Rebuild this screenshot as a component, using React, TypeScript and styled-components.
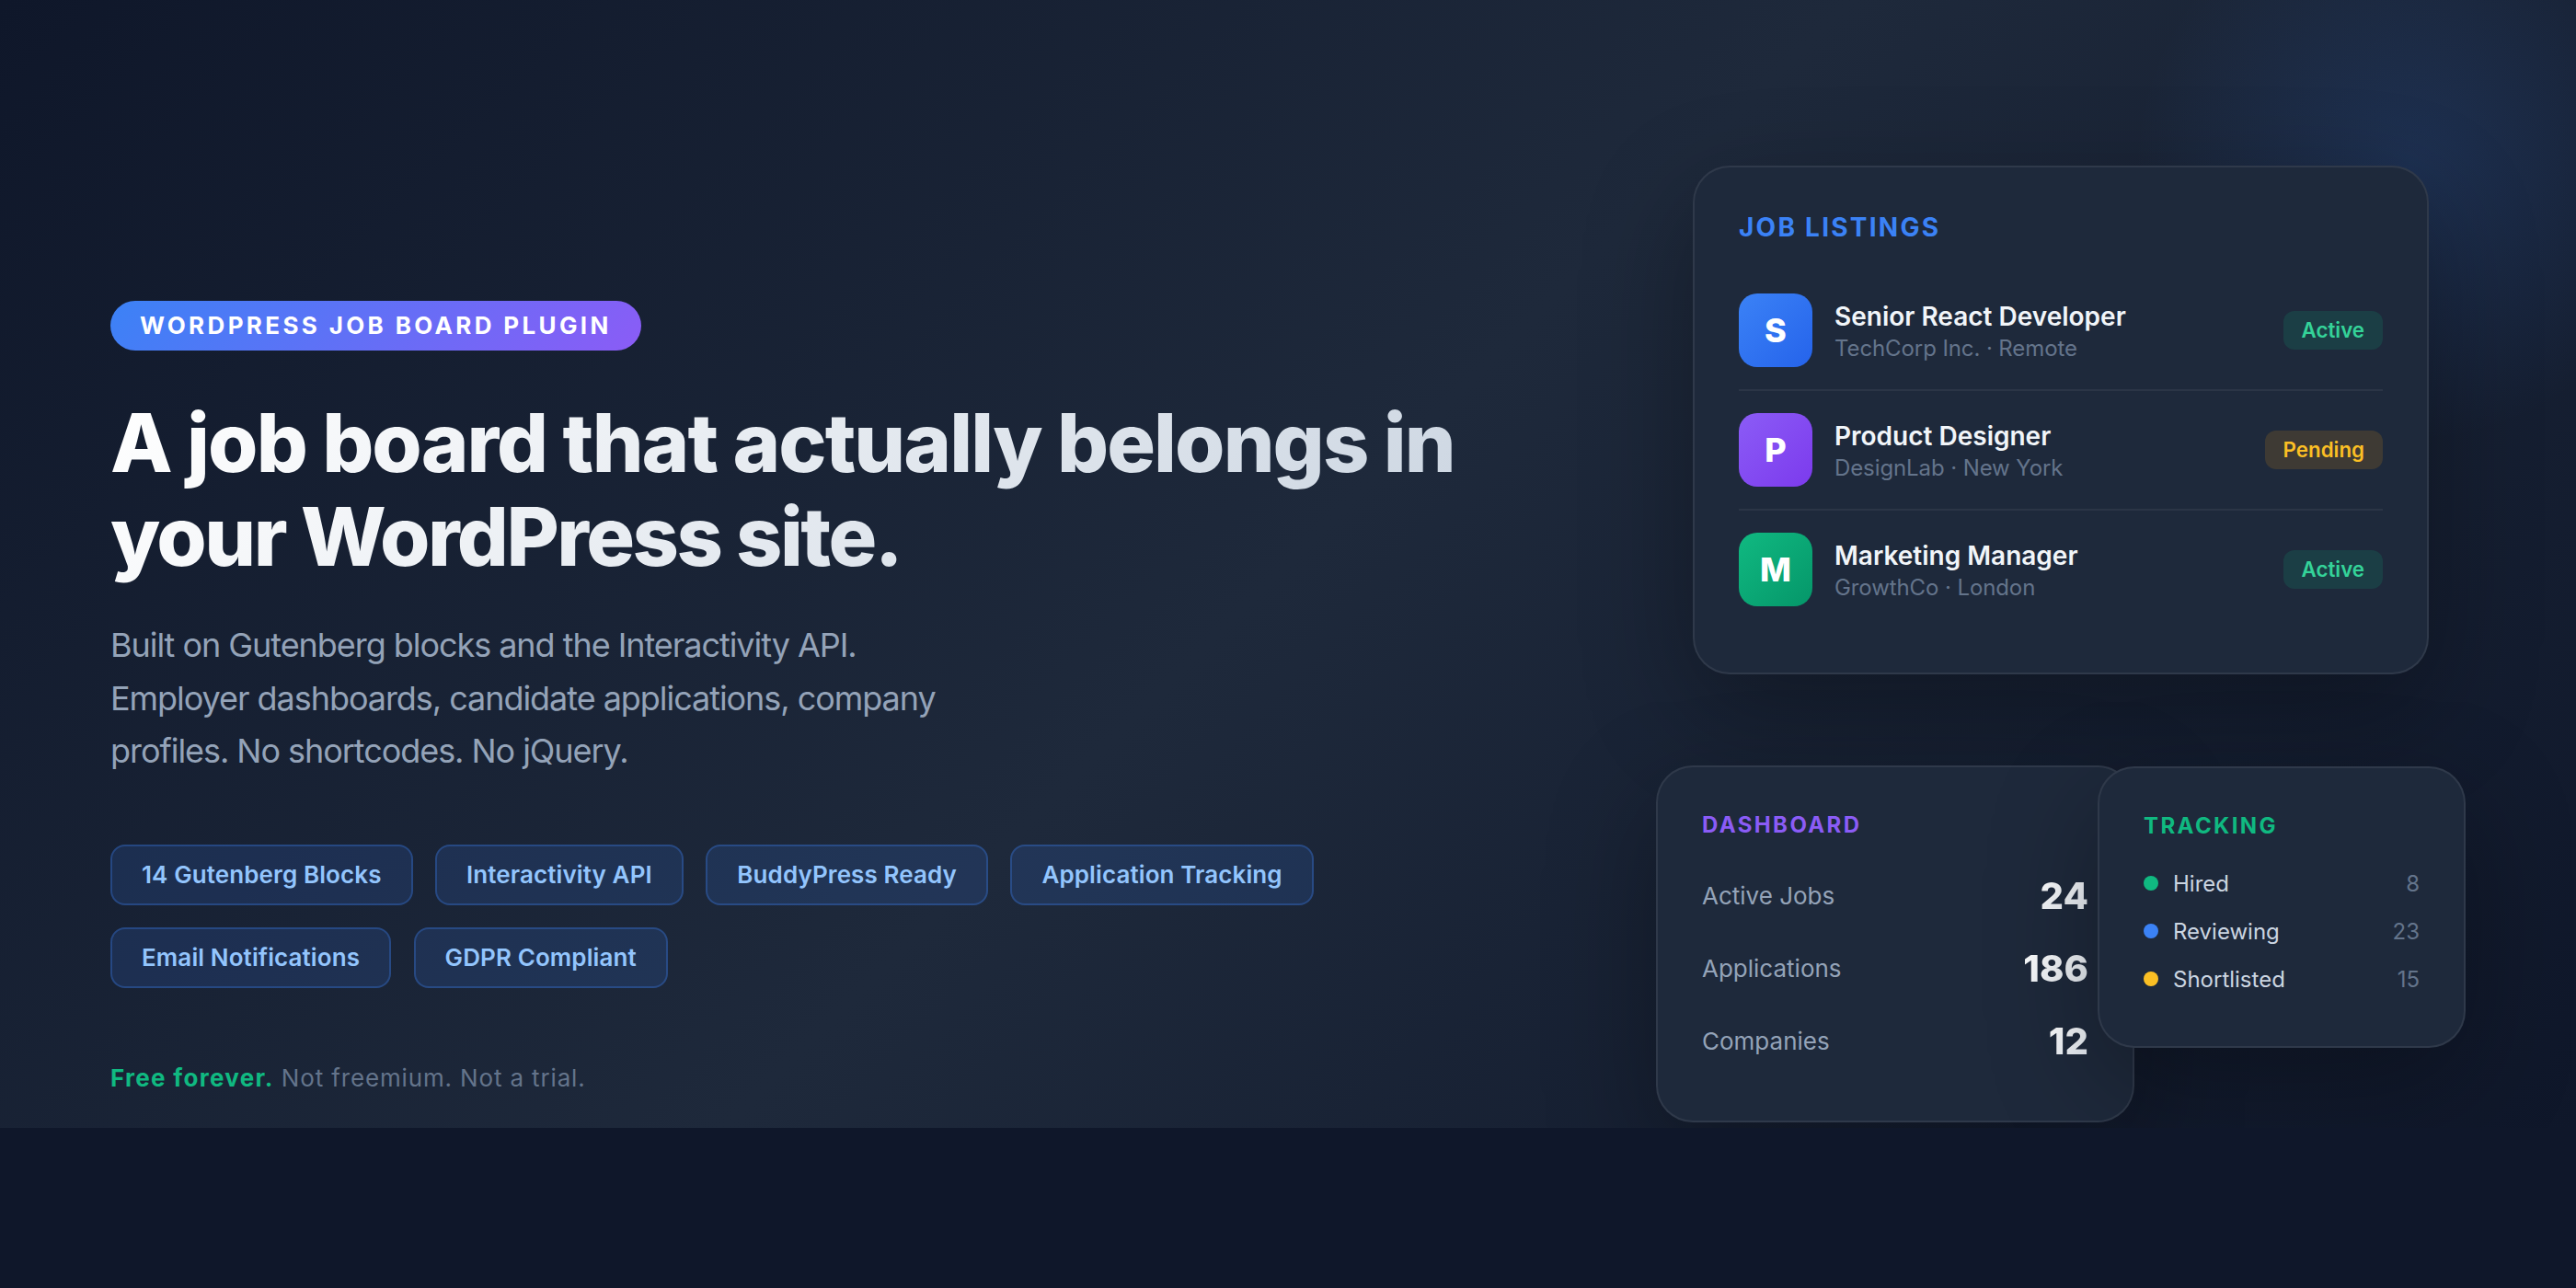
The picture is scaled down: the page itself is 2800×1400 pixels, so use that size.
import styled, { createGlobalStyle } from "styled-components";

const GlobalStyle = createGlobalStyle`
  html, body {
    margin: 0;
    padding: 0;
    background: #0f172a;
  }
  body {
    width: 2800px;
    height: 1400px;
    overflow: hidden;
    font-family: Inter, "Noto Sans", sans-serif;
  }
  * {
    box-sizing: border-box;
  }
`;

const Hero = styled.section`
  height: 1226px;
  padding: 0 120px;
  display: flex;
  justify-content: space-between;
  overflow: hidden;
  background:
    radial-gradient(circle at 2620px 180px, rgba(59, 130, 246, 0.15) 0, rgba(59, 130, 246, 0) 300px),
    linear-gradient(135deg, #0f172a 0%, #1e293b 50%, #0f172a 100%);
`;

const Copy = styled.div`
  width: 1500px;
  padding-top: 327px;
`;

const Eyebrow = styled.div`
  display: inline-block;
  height: 54px;
  padding: 0 32px;
  border-radius: 27px;
  background: linear-gradient(135deg, #3b82f6, #8b5cf6);
  color: #fff;
  font-size: 26px;
  line-height: 54px;
  font-weight: 700;
  letter-spacing: 3.35px;
  text-transform: uppercase;
`;

const Title = styled.h1`
  margin: 49px 0 0;
  font-size: 88px;
  line-height: 102px;
  font-weight: 800;
  letter-spacing: -0.022em;
  background: linear-gradient(135deg, #ffffff 0%, #cbd5e1 100%);
  -webkit-background-clip: text;
  background-clip: text;
  color: transparent;
  width: fit-content;
`;

const TightLine = styled.span`
  letter-spacing: -0.029em;
`;

const Lead = styled.p`
  margin: 39px 0 0;
  max-width: 960px;
  font-size: 36px;
  line-height: 57.6px;
  font-weight: 400;
  letter-spacing: -1.05px;
  color: #94a3b8;
`;

const Tags = styled.div`
  margin-top: 72px;
  display: flex;
  flex-wrap: wrap;
  gap: 24px 24.5px;
`;

const Tag = styled.span`
  height: 66px;
  padding: 0 32px;
  border-radius: 16px;
  border: 2px solid rgba(59, 130, 246, 0.3);
  background: rgba(59, 130, 246, 0.15);
  color: #93c5fd;
  font-size: 26px;
  line-height: 62px;
  font-weight: 600;
  letter-spacing: 0.1px;
`;

const Note = styled.p`
  margin: 80px 0 0;
  font-size: 26px;
  line-height: 36px;
  letter-spacing: 0.85px;
  color: #64748b;
  strong {
    font-weight: 700;
    letter-spacing: 1.3px;
    color: #10b981;
  }
`;

const Visual = styled.div`
  width: 880px;
  padding-top: 180px;
`;

const Card = styled.div`
  border-radius: 40px;
  border: 2px solid rgba(255, 255, 255, 0.08);
  background: #1e293b;
  padding: 48px;
  box-shadow: 0 40px 120px rgba(0, 0, 0, 0.3);
`;

const ListingsCard = styled(Card)`
  width: 800px;
  height: 553px;
  margin-left: 40px;
`;

const CardLabel = styled.div<{ $color: string }>`
  font-size: 28px;
  line-height: 34px;
  font-weight: 700;
  letter-spacing: 0.08em;
  text-transform: uppercase;
  color: ${(p) => p.$color};
`;

const SmallLabel = styled(CardLabel)`
  font-size: 24px;
  line-height: 30px;
  letter-spacing: 0.1em;
`;

const ListingRows = styled.div`
  margin-top: 31px;
`;

const ListingRow = styled.div`
  display: flex;
  align-items: center;
  gap: 24px;
  padding: 24px 0;
  & + & {
    border-top: 2px solid rgba(255, 255, 255, 0.06);
  }
`;

const Avatar = styled.div<{ $from: string; $to: string }>`
  width: 80px;
  height: 80px;
  flex-shrink: 0;
  border-radius: 20px;
  display: flex;
  align-items: center;
  justify-content: center;
  background: linear-gradient(135deg, ${(p) => p.$from}, ${(p) => p.$to});
  color: #fff;
  font-size: 36px;
  font-weight: 800;
`;

const ListingText = styled.div`
  flex: 1;
  padding-top: 2px;
`;

const ListingName = styled.div`
  font-size: 28px;
  line-height: 34px;
  font-weight: 600;
  color: #f1f5f9;
`;

const ListingMeta = styled.div`
  margin-top: 3px;
  font-size: 24px;
  line-height: 30px;
  letter-spacing: -0.1px;
  color: #64748b;
`;

const Status = styled.span<{ $kind: "active" | "pending" }>`
  height: 42px;
  padding: 0 20px;
  border-radius: 12px;
  font-size: 22.3px;
  line-height: 42px;
  font-weight: 600;
  color: ${(p) => (p.$kind === "active" ? "#34d399" : "#fbbf24")};
  background: ${(p) => (p.$kind === "active" ? "rgba(16, 185, 129, 0.15)" : "rgba(245, 158, 11, 0.15)")};
`;

const BottomRow = styled.div`
  margin-top: 99px;
  display: flex;
  align-items: flex-start;
`;

const DashboardCard = styled(Card)`
  width: 520px;
  height: 388px;
`;

const TrackingCard = styled(Card)`
  position: relative;
  width: 400px;
  height: 306px;
  margin: 1px 0 0 -40px;
`;

const StatRows = styled.div`
  margin-top: 22px;
`;

const StatRow = styled.div`
  height: 79px;
  display: flex;
  align-items: center;
  justify-content: space-between;
`;

const StatLabel = styled.span`
  font-size: 26px;
  color: #94a3b8;
`;

const StatValue = styled.span`
  font-size: 40px;
  font-weight: 800;
  background: linear-gradient(135deg, #ffffff, #e2e8f0);
  -webkit-background-clip: text;
  background-clip: text;
  color: transparent;
`;

const TrackRows = styled.div`
  margin-top: 21px;
`;

const TrackRow = styled.div`
  height: 52px;
  display: flex;
  align-items: center;
  gap: 16px;
`;

const Dot = styled.span<{ $color: string }>`
  width: 16px;
  height: 16px;
  border-radius: 50%;
  background: ${(p) => p.$color};
`;

const TrackLabel = styled.span`
  flex: 1;
  font-size: 24px;
  color: #cbd5e1;
`;

const TrackCount = styled.span`
  font-size: 24px;
  color: #64748b;
`;

const tags = [
  "14 Gutenberg Blocks",
  "Interactivity API",
  "BuddyPress Ready",
  "Application Tracking",
  "Email Notifications",
  "GDPR Compliant",
];

const listings = [
  { letter: "S", from: "#3b82f6", to: "#2563eb", name: "Senior React Developer", meta: "TechCorp Inc. · Remote", kind: "active" as const },
  { letter: "P", from: "#8b5cf6", to: "#7c3aed", name: "Product Designer", meta: "DesignLab · New York", kind: "pending" as const },
  { letter: "M", from: "#10b981", to: "#059669", name: "Marketing Manager", meta: "GrowthCo · London", kind: "active" as const },
];

const stats = [
  ["Active Jobs", "24"],
  ["Applications", "186"],
  ["Companies", "12"],
];

const tracking = [
  { color: "#10b981", label: "Hired", count: 8 },
  { color: "#3b82f6", label: "Reviewing", count: 23 },
  { color: "#fbbf24", label: "Shortlisted", count: 15 },
];

export default function App() {
  return (
    <>
      <GlobalStyle />
      <Hero>
        <Copy>
          <Eyebrow>WordPress Job Board Plugin</Eyebrow>
          <Title>
            A job board that actually belongs in
            <br />
            <TightLine>your WordPress site.</TightLine>
          </Title>
          <Lead>
            Built on Gutenberg blocks and the Interactivity API. Employer dashboards, candidate applications, company
            profiles. No shortcodes. No jQuery.
          </Lead>
          <Tags>
            {tags.map((t) => (
              <Tag key={t}>{t}</Tag>
            ))}
          </Tags>
          <Note>
            <strong>Free forever.</strong> Not freemium. Not a trial.
          </Note>
        </Copy>
        <Visual>
          <ListingsCard>
            <CardLabel $color="#3b82f6">Job Listings</CardLabel>
            <ListingRows>
              {listings.map((l) => (
                <ListingRow key={l.name}>
                  <Avatar $from={l.from} $to={l.to}>{l.letter}</Avatar>
                  <ListingText>
                    <ListingName>{l.name}</ListingName>
                    <ListingMeta>{l.meta}</ListingMeta>
                  </ListingText>
                  <Status $kind={l.kind}>{l.kind === "active" ? "Active" : "Pending"}</Status>
                </ListingRow>
              ))}
            </ListingRows>
          </ListingsCard>
          <BottomRow>
            <DashboardCard>
              <SmallLabel $color="#8b5cf6">Dashboard</SmallLabel>
              <StatRows>
                {stats.map(([label, value]) => (
                  <StatRow key={label}>
                    <StatLabel>{label}</StatLabel>
                    <StatValue>{value}</StatValue>
                  </StatRow>
                ))}
              </StatRows>
            </DashboardCard>
            <TrackingCard>
              <SmallLabel $color="#10b981">Tracking</SmallLabel>
              <TrackRows>
                {tracking.map((r) => (
                  <TrackRow key={r.label}>
                    <Dot $color={r.color} />
                    <TrackLabel>{r.label}</TrackLabel>
                    <TrackCount>{r.count}</TrackCount>
                  </TrackRow>
                ))}
              </TrackRows>
            </TrackingCard>
          </BottomRow>
        </Visual>
      </Hero>
    </>
  );
}
